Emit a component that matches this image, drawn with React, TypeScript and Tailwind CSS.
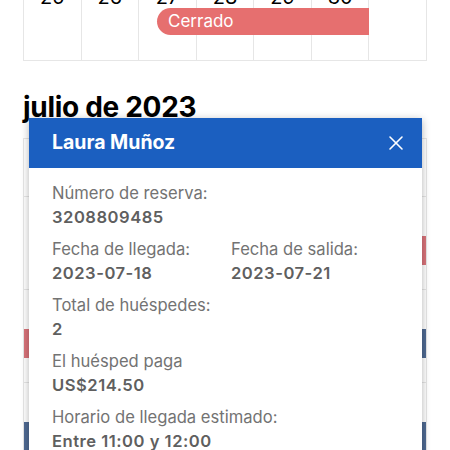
import { X } from 'lucide-react';

const topDays = ['25', '26', '27', '28', '29', '30', ''];

type Field = { label: string; value: string };

const Info = ({ label, value }: Field) => (
  <div className="mb-2">
    <p className="text-[16.6px] leading-6 text-[#737373]">{label}</p>
    <p className="text-[16.6px] leading-6 font-semibold text-[#5f5f5f] tracking-[0.5px]">{value}</p>
  </div>
);

const GridRow = ({ h, marks }: { h: string; marks?: Record<number, string> }) => (
  <div className={`grid grid-cols-7 ${h}`}>
    {Array.from({ length: 7 }).map((_, i) => (
      <div key={i} className="relative border-r border-b border-[#e6e6e6]">
        {marks?.[i] === 'red' && (
          <div className="absolute left-0 right-0 top-[39px] h-[29px] bg-[#d9737a]" />
        )}
        {marks?.[i] === 'blue' && (
          <div className="absolute left-0 right-0 top-[39px] h-[29px] bg-[#4f6a93]" />
        )}
      </div>
    ))}
  </div>
);

export default function App() {
  return (
    <div className="relative h-[450px] w-[450px] overflow-hidden bg-white font-['Inter',sans-serif]">
      {/* previous month tail */}
      <div className="mx-[23px] -mt-[32px] relative">
        <div className="grid grid-cols-7 h-[93px] border-l border-[#e6e6e6]">
          {topDays.map((d, i) => (
            <div key={i} className="border-r border-b border-[#e6e6e6] text-center text-[20px] leading-6 text-black pt-[17px]">
              {d}
            </div>
          ))}
        </div>
        <div className="absolute left-[134px] w-[212px] top-[40px] h-[27px] rounded-l-full bg-[#e66f6f] pl-[11px] text-[17px] leading-[27px] text-white">
          Cerrado
        </div>
      </div>

      <h2 className="mx-[23px] mt-[30px] text-[28px] leading-8 font-bold text-black tracking-[-0.3px]">julio de 2023</h2>

      <div className="mx-[23px] mt-[15px] border-l border-t border-[#e6e6e6]">
        <GridRow h="h-[58px]" />
        <GridRow h="h-[93px]" marks={{ 6: 'red' }} />
        <GridRow h="h-[93px]" marks={{ 0: 'red', 6: 'blue' }} />
        <GridRow h="h-[93px]" marks={{ 0: 'blue', 6: 'blue' }} />
      </div>

      {/* reservation popup */}
      <div className="absolute left-[29px] top-[118px] w-[393px] h-[360px] bg-white shadow-[0_2px_8px_rgba(0,0,0,0.3)]">
        <div className="h-[50px] bg-[#1b5fc0] flex items-center justify-between pl-[23px] pr-[14px]">
          <span className="text-[19.5px] font-bold text-white">Laura Muñoz</span>
          <X size={24} strokeWidth={1.6} className="text-white" />
        </div>
        <div className="pt-[13px] pl-[23px]">
          <Info label="Número de reserva:" value="3208809485" />
          <div className="flex">
            <div className="w-[179px]">
              <Info label="Fecha de llegada:" value="2023-07-18" />
            </div>
            <Info label="Fecha de salida:" value="2023-07-21" />
          </div>
          <Info label="Total de huéspedes:" value="2" />
          <Info label="El huésped paga" value="US$214.50" />
          <Info label="Horario de llegada estimado:" value="Entre 11:00 y 12:00" />
        </div>
      </div>
    </div>
  );
}
